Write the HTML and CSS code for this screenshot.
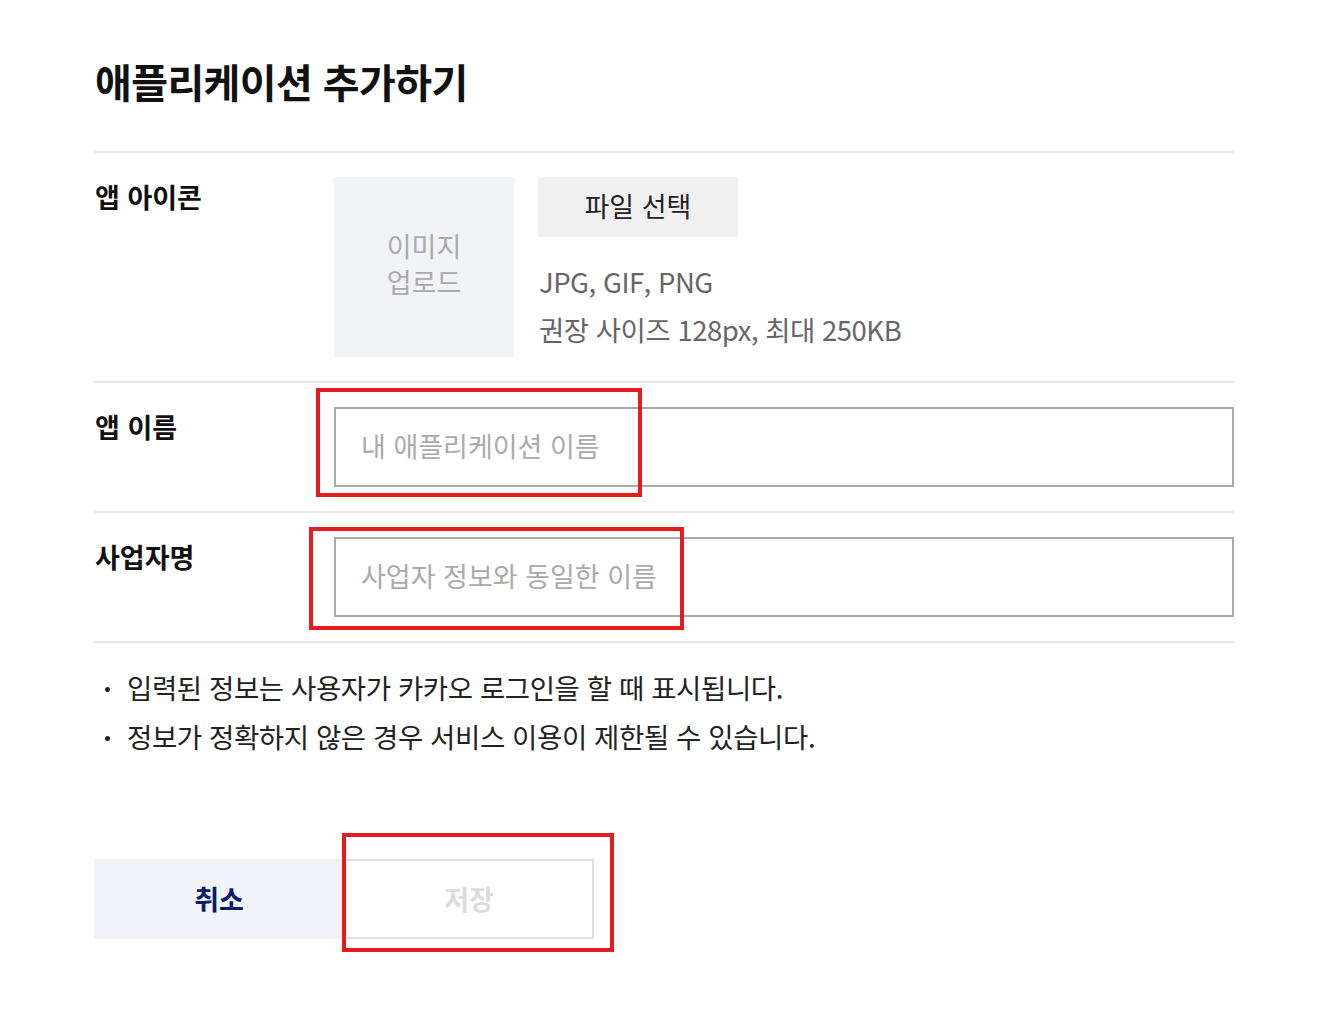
FILE: index.html
```html
<!DOCTYPE html>
<html lang="ko">
<head>
<meta charset="utf-8">
<title>애플리케이션 추가하기</title>
<link rel="stylesheet" href="styles.css">
</head>
<body>
<div class="page">
  <h1 class="title">애플리케이션 추가하기</h1>
  <div class="form">
    <div class="row">
      <div class="label">앱 아이콘</div>
      <div class="field icon-field">
        <div class="thumb">이미지<br>업로드</div>
        <div class="file-info">
          <button class="file-btn" type="button">파일 선택</button>
          <p class="hint hint-first">JPG, GIF, PNG</p>
          <p class="hint">권장 사이즈 128px, 최대 250KB</p>
        </div>
      </div>
    </div>
    <div class="row">
      <div class="label">앱 이름</div>
      <div class="field">
        <input class="text-input" type="text" placeholder="내 애플리케이션 이름">
      </div>
    </div>
    <div class="row">
      <div class="label">사업자명</div>
      <div class="field">
        <input class="text-input" type="text" placeholder="사업자 정보와 동일한 이름">
      </div>
    </div>
  </div>
  <ul class="notes">
    <li>입력된 정보는 사용자가 카카오 로그인을 할 때 표시됩니다.</li>
    <li>정보가 정확하지 않은 경우 서비스 이용이 제한될 수 있습니다.</li>
  </ul>
  <div class="actions">
    <button class="btn btn-cancel" type="button">취소</button>
    <button class="btn btn-save" type="button" disabled>저장</button>
  </div>
</div>
<div class="mark mark-1"></div>
<div class="mark mark-2"></div>
<div class="mark mark-3"></div>
</body>
</html>
```

FILE: styles.css
```css
* { box-sizing: border-box; }
html, body {
  margin: 0;
  padding: 0;
  background: #fff;
}
body {
  font-family: "Noto Sans CJK KR", "Noto Sans", sans-serif;
  color: #222;
  position: relative;
  width: 1330px;
  min-height: 1024px;
}
.page {
  width: 1140px;
  margin-left: 94px;
  padding-top: 51px;
}
.title {
  margin: 0;
  font-size: 40px;
  line-height: 60px;
  font-weight: 700;
  color: #111;
  letter-spacing: -0.6px;
  padding-left: 1px;
  padding-bottom: 40px;
  border-bottom: 2px solid #e6e6e6;
}
.row {
  display: flex;
  padding: 24px 0 24px;
  border-bottom: 2px solid #e6e6e6;
}
.label {
  width: 240px;
  flex: none;
  font-size: 27px;
  font-weight: 700;
  line-height: 40px;
  color: #111;
  padding-left: 1px;
}
.field {
  flex: 1;
}
.icon-field {
  display: flex;
  gap: 24px;
}
.thumb {
  width: 180px;
  height: 180px;
  background: #f2f3f7;
  color: #aaa;
  font-size: 27px;
  line-height: 36px;
  display: flex;
  align-items: center;
  justify-content: center;
  text-align: center;
  padding-bottom: 6px;
}
.file-info {
  display: flex;
  flex-direction: column;
  align-items: flex-start;
}
.file-btn {
  width: 200px;
  height: 60px;
  border: 0;
  background: #f0f0f0;
  font-family: inherit;
  font-size: 27px;
  color: #222;
  padding: 0 0 4px;
}
.hint {
  margin: 0;
  font-size: 27.5px;
  line-height: 48px;
  color: #666;
  letter-spacing: -0.5px;
  padding-left: 1px;
}
.hint-first {
  margin-top: 20px;
}
.text-input {
  display: block;
  width: 100%;
  height: 80px;
  border: 2px solid #aaa;
  padding: 0 0 4px 25px;
  font-family: inherit;
  font-size: 27px;
  color: #222;
  outline: none;
  background: #fff;
}
.text-input::placeholder {
  color: #aaa;
}
.notes {
  list-style: none;
  margin: 20px 0 0;
  padding: 0 0 0 11px;
}
.notes li {
  position: relative;
  font-size: 27.5px;
  line-height: 49px;
  color: #222;
  padding-left: 22px;
  letter-spacing: -0.4px;
}
.notes li::before {
  content: "";
  position: absolute;
  left: 0;
  top: 24px;
  width: 5px;
  height: 5px;
  border-radius: 50%;
  background: #222;
}
.actions {
  display: flex;
  margin-top: 98px;
}
.btn {
  width: 250px;
  height: 80px;
  font-family: inherit;
  font-size: 27px;
  font-weight: 700;
  padding: 0 0 2px;
}
.btn-cancel {
  border: 0;
  background: #f2f3f8;
  color: #0b1a6b;
}
.btn-save {
  background: #fff;
  border: 2px solid #dedede;
  color: #dcdcdc;
}
.mark {
  position: absolute;
  border: 4px solid #e51b22;
  pointer-events: none;
}
.mark-1 { left: 316px; top: 388px; width: 326px; height: 109px; }
.mark-2 { left: 309px; top: 527px; width: 375px; height: 103px; }
.mark-3 { left: 342px; top: 833px; width: 272px; height: 119px; }
```
